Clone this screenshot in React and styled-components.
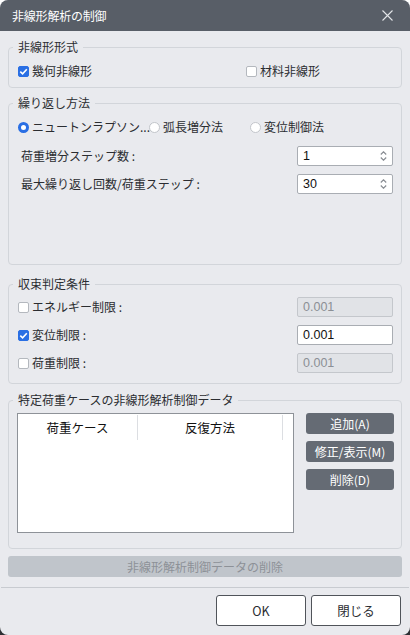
import React from 'react';
import styled, { createGlobalStyle } from 'styled-components';

const GlobalStyle = createGlobalStyle`
  html, body {
    margin: 0;
    padding: 0;
    background: linear-gradient(#ffffff 50%, #2e3034 50%);
  }
  * { box-sizing: border-box; }
`;

const FONT = `"Noto Sans CJK JP", "Noto Sans", sans-serif`;

const Window = styled.div`
  width: 410px;
  height: 635px;
  display: flex;
  flex-direction: column;
  background: #e9eaee;
  border-radius: 8px;
  overflow: hidden;
  font-family: ${FONT};
  font-size: 12px;
  color: #2b2d31;
`;

const TitleBar = styled.div`
  height: 31px;
  flex: none;
  display: flex;
  align-items: center;
  justify-content: space-between;
  padding: 0 12px 0 12px;
  background: #585e67;
  color: #fff;
`;

const Title = styled.span`
  font-size: 12px;
  line-height: 16px;
  letter-spacing: -0.2px;
`;

const CloseButton = styled.button`
  width: 14px;
  height: 14px;
  padding: 0;
  border: none;
  background: none;
  display: flex;
  align-items: center;
  justify-content: center;
  margin-right: 4px;
`;

const Body = styled.div`
  padding: 0 8px;
  display: flex;
  flex-direction: column;
`;

const Group = styled.fieldset`
  margin: ${(p) => p.$gap}px 0 0;
  padding: ${(p) => p.$pt}px 8px ${(p) => p.$pb}px ${(p) => p.$pl || 9}px;
  border: 1px solid #d2d5da;
  border-radius: 4px;
  min-width: 0;
`;

const Legend = styled.legend`
  padding: 0 5px;
  margin-left: ${(p) => p.$shift || -5}px;
  font-size: 12px;
  line-height: 16px;
  color: #2b2d31;
`;

const OptionGrid = styled.div`
  display: grid;
  grid-template-columns: ${(p) => p.$cols};
  align-items: center;
  height: 16px;
`;

const Option = styled.label`
  display: flex;
  align-items: center;
  gap: 3px;
  line-height: 16px;
  white-space: nowrap;
`;

const Box = styled.span`
  width: 11px;
  height: 11px;
  flex: none;
  border-radius: 2px;
  border: 1px solid ${(p) => (p.$on ? '#2a6fe4' : '#b4b8be')};
  background: ${(p) => (p.$on ? '#2a6fe4' : '#fff')};
  display: flex;
  align-items: center;
  justify-content: center;
`;

const Radio = styled.span`
  width: 11px;
  height: 11px;
  flex: none;
  border-radius: 50%;
  background: #fff;
  border: ${(p) => (p.$on ? '3px solid #2a6fe4' : '1px solid #c2c5ca')};
`;

const FieldRow = styled.div`
  display: flex;
  align-items: center;
  justify-content: space-between;
  height: 20px;
  margin-top: ${(p) => p.$gap}px;
`;

const FieldLabel = styled.span`
  padding-left: ${(p) => p.$indent || 0}px;
  line-height: 16px;
`;

const Input = styled.div`
  width: 96px;
  height: 20px;
  display: flex;
  align-items: center;
  justify-content: space-between;
  padding: 0 5px 0 5px;
  border: 1px solid ${(p) => (p.$disabled ? '#c4c7cc' : '#a9adb3')};
  border-radius: 2px;
  background: ${(p) => (p.$disabled ? '#e1e3e7' : '#fff')};
  color: ${(p) => (p.$disabled ? '#8b8f95' : '#111')};
  font-family: "Liberation Sans", Arial, sans-serif;
  font-size: 12.5px;
`;

const Spinner = styled.span`
  display: flex;
  flex-direction: column;
  gap: 2px;
`;

const ListArea = styled.div`
  display: flex;
  gap: 12px;
`;

const Table = styled.div`
  width: 277px;
  height: 120px;
  background: #fff;
  border: 1px solid #8e9298;
  padding: 1px 10px 0 0;
`;

const HeadRow = styled.div`
  display: grid;
  grid-template-columns: 120px 145px;
  height: 25px;
`;

const HeadCell = styled.div`
  display: flex;
  align-items: center;
  justify-content: center;
  color: #111;
  font-size: 12.5px;
  border-right: 1px solid #dcdee2;
`;

const SideButtons = styled.div`
  display: flex;
  flex-direction: column;
  gap: 7px;
`;

const SideButton = styled.button`
  width: 88px;
  height: 21px;
  padding: 0;
  border: none;
  border-radius: 3px;
  background: #656b74;
  color: #fff;
  font-family: ${FONT};
  font-size: 12px;
`;

const WideButton = styled.button`
  margin-top: 7px;
  height: 21px;
  border: none;
  border-radius: 3px;
  background: #c0c5cb;
  color: #8d9197;
  font-family: ${FONT};
  font-size: 12px;
`;

const Divider = styled.div`
  margin: 10px 1px 0;
  height: 1px;
  background: #c8cbd0;
`;

const Footer = styled.div`
  display: flex;
  justify-content: flex-end;
  gap: 5px;
  padding: 7px 9px 0 0;
`;

const DialogButton = styled.button`
  width: 90px;
  height: 31px;
  border: 1px solid #50545a;
  border-radius: 3px;
  background: #fff;
  color: #2b2d31;
  font-family: ${FONT};
  font-size: 12.5px;
`;

const Check = () => (
  <svg width="9" height="9" viewBox="0 0 9 9">
    <path d="M1.3 4.6 L3.6 6.8 L7.8 2.2" fill="none" stroke="#fff" strokeWidth="1.6" />
  </svg>
);

const Arrows = () => (
  <Spinner>
    <svg width="7" height="4" viewBox="0 0 7 4">
      <path d="M0.8 3.5 L3.5 0.8 L6.2 3.5" fill="none" stroke="#8a8e94" strokeWidth="1.2" />
    </svg>
    <svg width="7" height="4" viewBox="0 0 7 4">
      <path d="M0.8 0.5 L3.5 3.2 L6.2 0.5" fill="none" stroke="#8a8e94" strokeWidth="1.2" />
    </svg>
  </Spinner>
);

const CheckOption = ({ on, children }) => (
  <Option>
    <Box $on={on}>{on && <Check />}</Box>
    {children}
  </Option>
);

const limits = [
  { label: 'エネルギー制限 :', on: false },
  { label: '変位制限 :', on: true },
  { label: '荷重制限 :', on: false },
];

export default function App() {
  return (
    <>
      <GlobalStyle />
      <Window>
        <TitleBar>
          <Title>非線形解析の制御</Title>
          <CloseButton>
            <svg width="11" height="11" viewBox="0 0 11 11">
              <path d="M0.5 0.5 L10.5 10.5 M10.5 0.5 L0.5 10.5" stroke="#e2e4e7" strokeWidth="1.1" />
            </svg>
          </CloseButton>
        </TitleBar>

        <Body>
          <Group $gap={8} $pt={8} $pb={8}>
            <Legend>非線形形式</Legend>
            <OptionGrid $cols="228px 1fr">
              <CheckOption on>幾何非線形</CheckOption>
              <CheckOption>材料非線形</CheckOption>
            </OptionGrid>
          </Group>

          <Group $gap={7} $pt={8} $pb={70}>
            <Legend>繰り返し方法</Legend>
            <OptionGrid $cols="131px 101px 1fr">
              <Option><Radio $on />ニュートンラプソン...</Option>
              <Option><Radio />弧長増分法</Option>
              <Option><Radio />変位制御法</Option>
            </OptionGrid>
            <FieldRow $gap={11}>
              <FieldLabel $indent={3}>荷重増分ステップ数 :</FieldLabel>
              <Input>1<Arrows /></Input>
            </FieldRow>
            <FieldRow $gap={8}>
              <FieldLabel $indent={3}>最大繰り返し回数/荷重ステップ :</FieldLabel>
              <Input>30<Arrows /></Input>
            </FieldRow>
          </Group>

          <Group $gap={11} $pt={5} $pb={10}>
            <Legend>収束判定条件</Legend>
            {limits.map((row, i) => (
              <FieldRow key={row.label} $gap={i === 0 ? 0 : 8}>
                <CheckOption on={row.on}>{row.label}</CheckOption>
                <Input $disabled={!row.on}>0.001</Input>
              </FieldRow>
            ))}
          </Group>

          <Group $gap={8} $pt={5} $pb={15} $pl={8}>
            <Legend $shift={-4}>特定荷重ケースの非線形解析制御データ</Legend>
            <ListArea>
              <Table>
                <HeadRow>
                  <HeadCell>荷重ケース</HeadCell>
                  <HeadCell>反復方法</HeadCell>
                </HeadRow>
              </Table>
              <SideButtons>
                <SideButton>追加(A)</SideButton>
                <SideButton>修正/表示(M)</SideButton>
                <SideButton>削除(D)</SideButton>
              </SideButtons>
            </ListArea>
          </Group>

          <WideButton disabled>非線形解析制御データの削除</WideButton>
        </Body>

        <Divider />
        <Footer>
          <DialogButton>OK</DialogButton>
          <DialogButton>閉じる</DialogButton>
        </Footer>
      </Window>
    </>
  );
}
